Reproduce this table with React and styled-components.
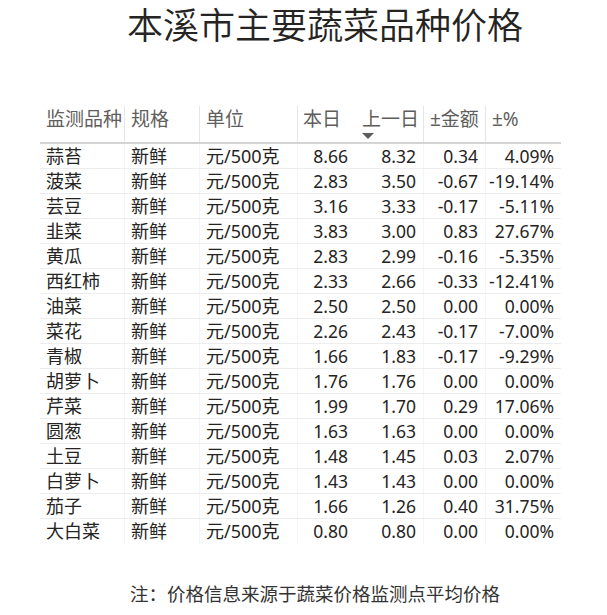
import React from "react";
import styled, { createGlobalStyle } from "styled-components";

const GlobalStyle = createGlobalStyle`
  html, body {
    margin: 0;
    padding: 0;
    background: #ffffff;
  }
  body {
    font-family: "Noto Sans", "Noto Sans CJK SC", sans-serif;
  }
`;

const COLS = "84px 75px 98px 58px 68px 62px 76px";

const rows = [
  ["蒜苔", "8.66", "8.32", "0.34", "4.09%"],
  ["菠菜", "2.83", "3.50", "-0.67", "-19.14%"],
  ["芸豆", "3.16", "3.33", "-0.17", "-5.11%"],
  ["韭菜", "3.83", "3.00", "0.83", "27.67%"],
  ["黄瓜", "2.83", "2.99", "-0.16", "-5.35%"],
  ["西红柿", "2.33", "2.66", "-0.33", "-12.41%"],
  ["油菜", "2.50", "2.50", "0.00", "0.00%"],
  ["菜花", "2.26", "2.43", "-0.17", "-7.00%"],
  ["青椒", "1.66", "1.83", "-0.17", "-9.29%"],
  ["胡萝卜", "1.76", "1.76", "0.00", "0.00%"],
  ["芹菜", "1.99", "1.70", "0.29", "17.06%"],
  ["圆葱", "1.63", "1.63", "0.00", "0.00%"],
  ["土豆", "1.48", "1.45", "0.03", "2.07%"],
  ["白萝卜", "1.43", "1.43", "0.00", "0.00%"],
  ["茄子", "1.66", "1.26", "0.40", "31.75%"],
  ["大白菜", "0.80", "0.80", "0.00", "0.00%"],
];

const Page = styled.div`
  width: 607px;
  height: 615px;
  overflow: hidden;
  color: #252423;
`;

const Title = styled.h1`
  margin: 0;
  padding: 3px 0 0 43px;
  text-align: center;
  font-weight: 350;
  font-size: 36px;
  line-height: 46px;
  color: #252423;
`;

const Table = styled.div`
  margin: 57px 0 0 40px;
  width: 521px;
`;

const HeadRow = styled.div`
  display: grid;
  grid-template-columns: ${COLS};
  height: 36px;
  border-bottom: 2px solid #d4d4d4;
`;

const HeadCell = styled.div`
  padding: 1px 0 0 ${(p) => p.$pl || 6}px;
  font-size: 19px;
  line-height: 24px;
  color: #605e5c;
  white-space: nowrap;
  border-left: ${(p) => (p.$sep ? "1px solid #e6e6e6" : "none")};
`;

const SortArrow = styled.div`
  width: 0;
  height: 0;
  margin-top: 2px;
  border-left: 6px solid transparent;
  border-right: 6px solid transparent;
  border-top: 6px solid #605e5c;
`;

const Row = styled.div`
  display: grid;
  grid-template-columns: ${COLS};
  height: 25px;
  border-bottom: ${(p) => (p.$last ? "none" : "1px solid #ededed")};
  box-sizing: border-box;
`;

const Cell = styled.div`
  font-size: ${(p) => (p.$num ? "17.5px" : "18px")};
  line-height: 24px;
  white-space: nowrap;
  text-align: ${(p) => (p.$num ? "right" : "left")};
  padding: ${(p) => (p.$num ? "0 7px 0 0" : "0 0 0 6px")};
  border-left: ${(p) => (p.$sep ? "1px solid #f5f5f5" : "none")};
`;

const Note = styled.div`
  margin-top: 38px;
  padding-left: 23px;
  text-align: center;
  font-size: 18.5px;
  line-height: 24px;
  color: #333333;
`;

export default function App() {
  return (
    <Page>
      <GlobalStyle />
      <Title>本溪市主要蔬菜品种价格</Title>
      <Table>
        <HeadRow>
          <HeadCell>监测品种</HeadCell>
          <HeadCell $sep>规格</HeadCell>
          <HeadCell $sep>单位</HeadCell>
          <HeadCell $sep $pl={5}>本日</HeadCell>
          <HeadCell $pl={7}>
            上一日
            <SortArrow />
          </HeadCell>
          <HeadCell $sep>±金额</HeadCell>
          <HeadCell $sep>±%</HeadCell>
        </HeadRow>
        {rows.map((r, i) => (
          <Row key={r[0]} $last={i === rows.length - 1}>
            <Cell>{r[0]}</Cell>
            <Cell $sep>新鲜</Cell>
            <Cell $sep>元/500克</Cell>
            <Cell $sep $num>{r[1]}</Cell>
            <Cell $num>{r[2]}</Cell>
            <Cell $sep $num>{r[3]}</Cell>
            <Cell $sep $num>{r[4]}</Cell>
          </Row>
        ))}
      </Table>
      <Note>注：价格信息来源于蔬菜价格监测点平均价格</Note>
    </Page>
  );
}
